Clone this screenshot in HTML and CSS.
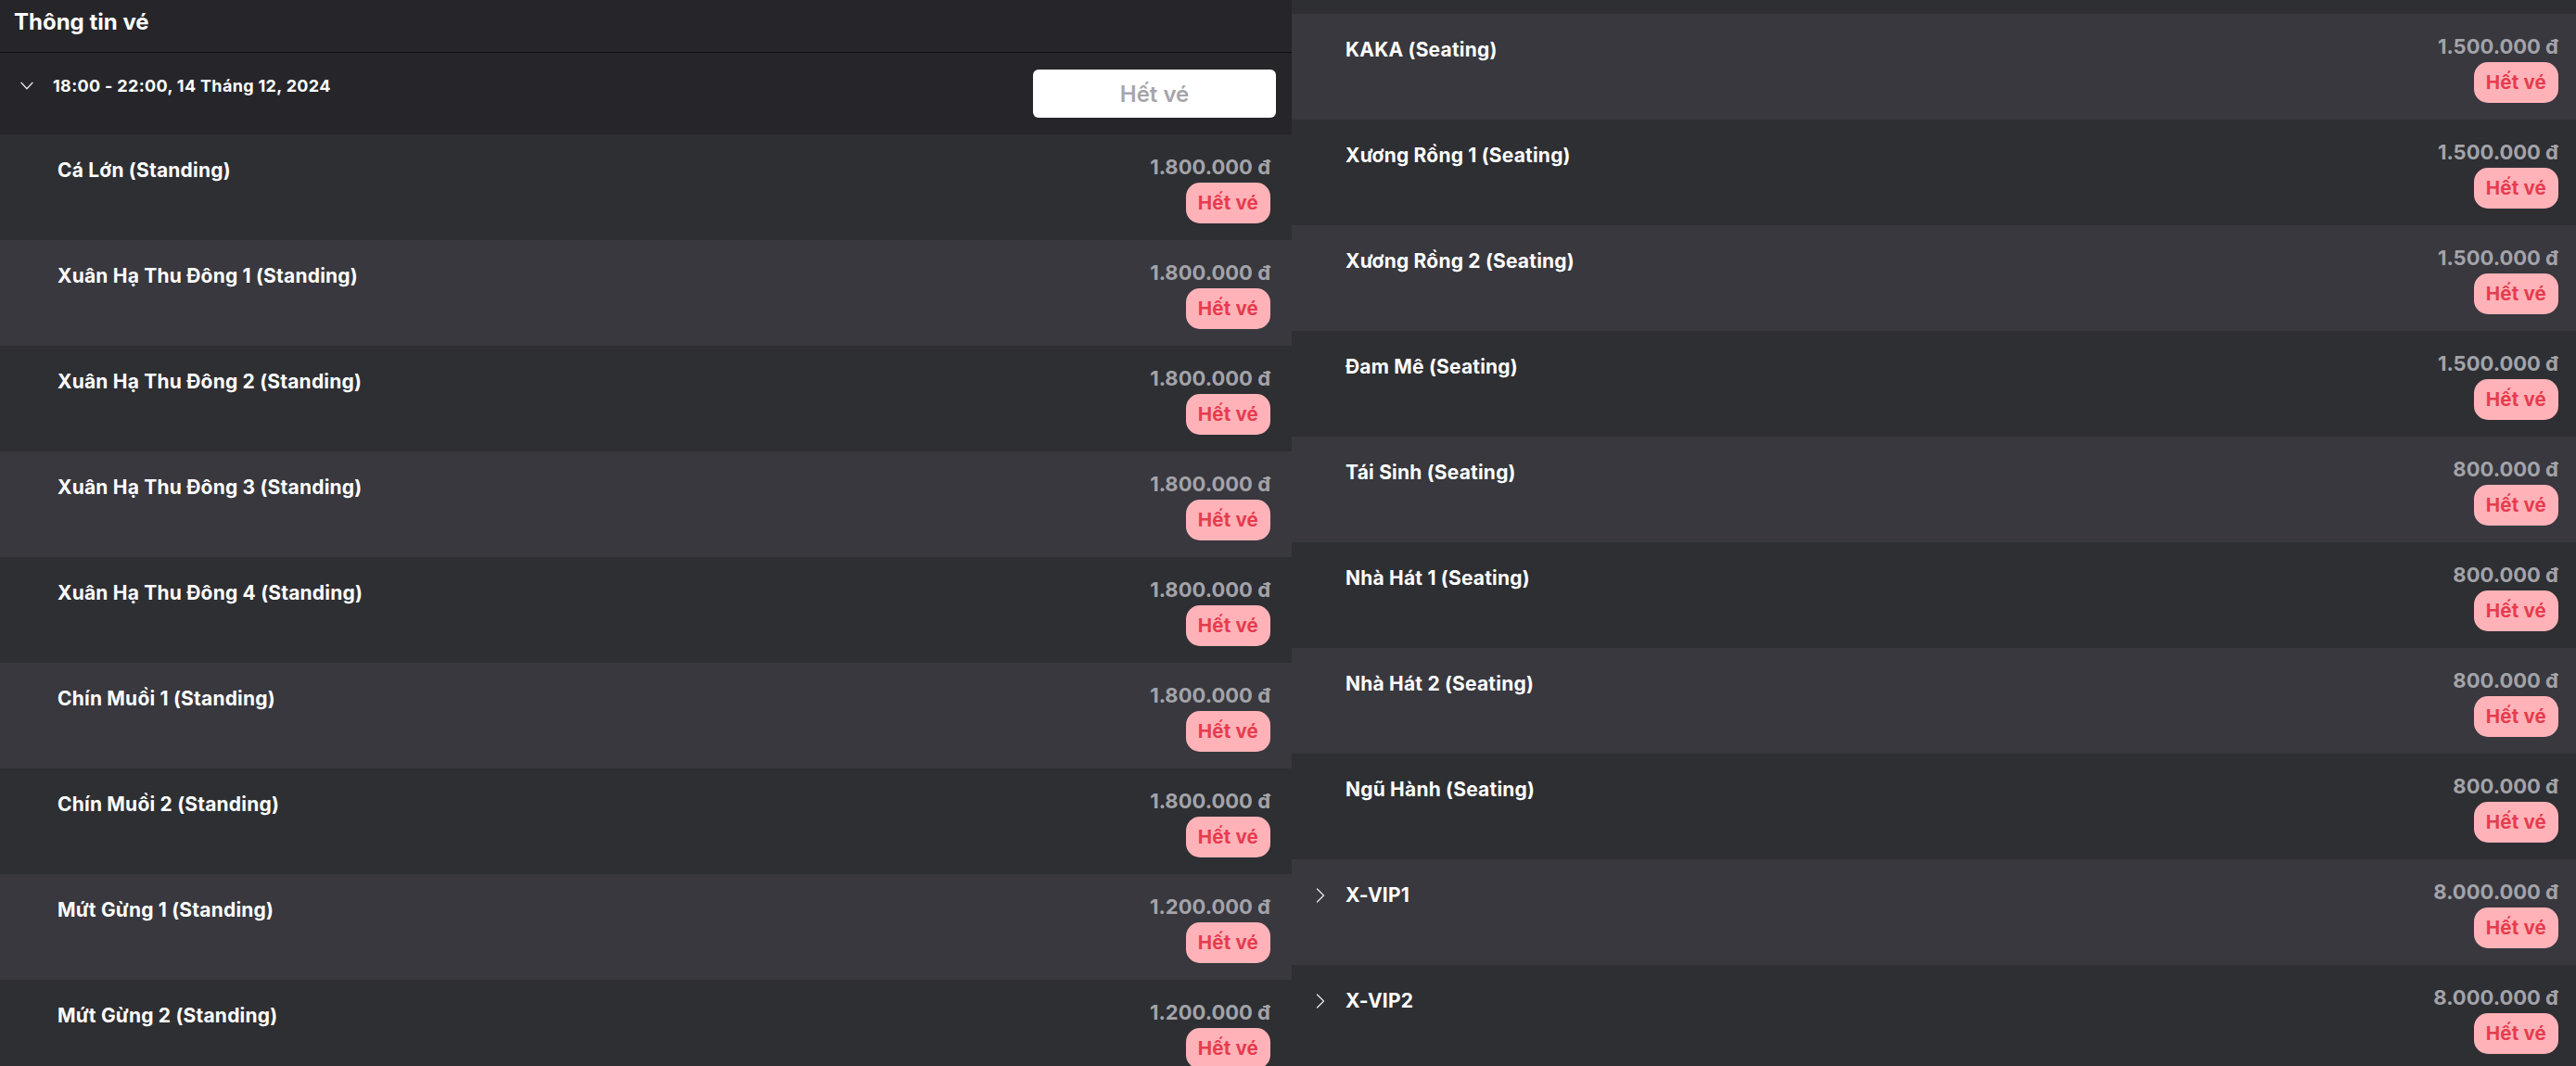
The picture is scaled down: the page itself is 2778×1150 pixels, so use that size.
FILE: index.html
```html
<!DOCTYPE html>
<html lang="vi">
<head>
<meta charset="utf-8">
<title>Thông tin vé</title>
<link rel="stylesheet" href="styles.css">
</head>
<body>
<div class="page">
  <section class="col col-left">
    <header class="panel-header"><h1 class="panel-title">Thông tin vé</h1></header>
    <div class="show-row">
      <div class="show-info">
        <span class="show-toggle"><svg width="14" height="9" viewBox="0 0 14 9"><path d="M1 1.2 L7 7.8 L13 1.2" fill="none" stroke="#e6e6e8" stroke-width="1.3" stroke-linecap="round" stroke-linejoin="round"/></svg></span>
        <span class="show-date">18:00 - 22:00, 14 Tháng 12, 2024</span>
      </div>
      <button class="soldout-btn" type="button">Hết vé</button>
    </div>
    <ul class="ticket-list">
      <li class="ticket"><span class="toggle"></span><span class="ticket-name">Cá Lớn (Standing)</span><div class="ticket-side"><span class="ticket-price">1.800.000 đ</span><span class="badge">Hết vé</span></div></li>
      <li class="ticket"><span class="toggle"></span><span class="ticket-name">Xuân Hạ Thu Đông 1 (Standing)</span><div class="ticket-side"><span class="ticket-price">1.800.000 đ</span><span class="badge">Hết vé</span></div></li>
      <li class="ticket"><span class="toggle"></span><span class="ticket-name">Xuân Hạ Thu Đông 2 (Standing)</span><div class="ticket-side"><span class="ticket-price">1.800.000 đ</span><span class="badge">Hết vé</span></div></li>
      <li class="ticket"><span class="toggle"></span><span class="ticket-name">Xuân Hạ Thu Đông 3 (Standing)</span><div class="ticket-side"><span class="ticket-price">1.800.000 đ</span><span class="badge">Hết vé</span></div></li>
      <li class="ticket"><span class="toggle"></span><span class="ticket-name">Xuân Hạ Thu Đông 4 (Standing)</span><div class="ticket-side"><span class="ticket-price">1.800.000 đ</span><span class="badge">Hết vé</span></div></li>
      <li class="ticket"><span class="toggle"></span><span class="ticket-name">Chín Muồi 1 (Standing)</span><div class="ticket-side"><span class="ticket-price">1.800.000 đ</span><span class="badge">Hết vé</span></div></li>
      <li class="ticket"><span class="toggle"></span><span class="ticket-name">Chín Muồi 2 (Standing)</span><div class="ticket-side"><span class="ticket-price">1.800.000 đ</span><span class="badge">Hết vé</span></div></li>
      <li class="ticket"><span class="toggle"></span><span class="ticket-name">Mứt Gừng 1 (Standing)</span><div class="ticket-side"><span class="ticket-price">1.200.000 đ</span><span class="badge">Hết vé</span></div></li>
      <li class="ticket"><span class="toggle"></span><span class="ticket-name">Mứt Gừng 2 (Standing)</span><div class="ticket-side"><span class="ticket-price">1.200.000 đ</span><span class="badge">Hết vé</span></div></li>
    </ul>
  </section>
  <section class="col col-right">
    <div class="ticket-tail"></div>
    <ul class="ticket-list ticket-list-cont">
      <li class="ticket"><span class="toggle"></span><span class="ticket-name">KAKA (Seating)</span><div class="ticket-side"><span class="ticket-price">1.500.000 đ</span><span class="badge">Hết vé</span></div></li>
      <li class="ticket"><span class="toggle"></span><span class="ticket-name">Xương Rồng 1 (Seating)</span><div class="ticket-side"><span class="ticket-price">1.500.000 đ</span><span class="badge">Hết vé</span></div></li>
      <li class="ticket"><span class="toggle"></span><span class="ticket-name">Xương Rồng 2 (Seating)</span><div class="ticket-side"><span class="ticket-price">1.500.000 đ</span><span class="badge">Hết vé</span></div></li>
      <li class="ticket"><span class="toggle"></span><span class="ticket-name">Đam Mê (Seating)</span><div class="ticket-side"><span class="ticket-price">1.500.000 đ</span><span class="badge">Hết vé</span></div></li>
      <li class="ticket"><span class="toggle"></span><span class="ticket-name">Tái Sinh (Seating)</span><div class="ticket-side"><span class="ticket-price">800.000 đ</span><span class="badge">Hết vé</span></div></li>
      <li class="ticket"><span class="toggle"></span><span class="ticket-name">Nhà Hát 1 (Seating)</span><div class="ticket-side"><span class="ticket-price">800.000 đ</span><span class="badge">Hết vé</span></div></li>
      <li class="ticket"><span class="toggle"></span><span class="ticket-name">Nhà Hát 2 (Seating)</span><div class="ticket-side"><span class="ticket-price">800.000 đ</span><span class="badge">Hết vé</span></div></li>
      <li class="ticket"><span class="toggle"></span><span class="ticket-name">Ngũ Hành (Seating)</span><div class="ticket-side"><span class="ticket-price">800.000 đ</span><span class="badge">Hết vé</span></div></li>
      <li class="ticket"><span class="toggle"><svg width="10" height="16" viewBox="0 0 10 16"><path d="M1.5 1 L8.5 8 L1.5 15" fill="none" stroke="#e6e6e8" stroke-width="1.3" stroke-linecap="round" stroke-linejoin="round"/></svg></span><span class="ticket-name">X-VIP1</span><div class="ticket-side"><span class="ticket-price">8.000.000 đ</span><span class="badge">Hết vé</span></div></li>
      <li class="ticket"><span class="toggle"><svg width="10" height="16" viewBox="0 0 10 16"><path d="M1.5 1 L8.5 8 L1.5 15" fill="none" stroke="#e6e6e8" stroke-width="1.3" stroke-linecap="round" stroke-linejoin="round"/></svg></span><span class="ticket-name">X-VIP2</span><div class="ticket-side"><span class="ticket-price">8.000.000 đ</span><span class="badge">Hết vé</span></div></li>
    </ul>
  </section>
</div>
</body>
</html>
```

FILE: styles.css
```css
html, body {
  margin: 0;
  padding: 0;
  height: 1150px;
  overflow: hidden;
  background: #2e2f33;
  font-family: Inter, "Noto Sans", sans-serif;
}

.page {
  display: grid;
  grid-template-columns: 1393px 1fr;
  height: 1150px;
  overflow: hidden;
}

.col {
  min-width: 0;
  overflow: hidden;
}

.panel-header {
  height: 57px;
  box-sizing: border-box;
  padding: 8px 15px;
  background: #26262a;
  border-bottom: 1px solid #0e0e10;
}

.panel-title {
  margin: 0;
  font-size: 24px;
  line-height: 32px;
  font-weight: 700;
  color: #ffffff;
}

.show-row {
  height: 88px;
  box-sizing: border-box;
  padding: 18px 17px 18px 22px;
  background: #26262a;
  display: flex;
  justify-content: space-between;
  align-items: flex-start;
}

.show-info {
  display: flex;
  align-items: center;
  margin-top: 4px;
  height: 27px;
}

.show-toggle {
  width: 35px;
  display: flex;
  align-items: center;
}

.show-toggle svg {
  display: block;
}

.show-date {
  font-size: 18px;
  line-height: 27px;
  font-weight: 700;
  letter-spacing: 0.33px;
  color: #ffffff;
}

.soldout-btn {
  width: 262px;
  height: 52px;
  border: none;
  border-radius: 6px;
  background: #ffffff;
  color: #a5a5aa;
  font-family: Inter, "Noto Sans", sans-serif;
  font-size: 24px;
  font-weight: 600;
  padding: 0;
}

.ticket-list {
  list-style: none;
  margin: 0;
  padding: 0;
}

.ticket {
  display: flex;
  align-items: flex-start;
  height: 114px;
  box-sizing: border-box;
  padding: 21px 23px 0 22px;
  background: #2e2f33;
}

.ticket-list .ticket:nth-child(even) {
  background: #38383e;
}

.ticket-list-cont .ticket {
  background: #38383e;
}

.ticket-list-cont .ticket:nth-child(even) {
  background: #2e2f33;
}

.col-right .ticket {
  padding: 21px 19px 0 18px;
}

.ticket-tail {
  height: 15px;
  background: #2e2f33;
}

.toggle {
  flex: none;
  width: 40px;
  height: 36px;
  box-sizing: border-box;
  padding-left: 8px;
  display: flex;
  align-items: center;
}

.toggle svg {
  display: block;
}

.ticket-name {
  flex: 1;
  font-size: 21px;
  line-height: 36px;
  font-weight: 700;
  letter-spacing: 0.2px;
  color: #ffffff;
}

.ticket-side {
  display: flex;
  flex-direction: column;
  align-items: flex-end;
  margin-top: -1px;
}

.ticket-price {
  font-size: 22px;
  line-height: 30px;
  font-weight: 700;
  color: #a3a3a9;
}

.badge {
  margin-top: 2px;
  height: 44px;
  line-height: 44px;
  padding: 0 13px;
  border-radius: 15px;
  background: #ffb3b8;
  color: #e63c4e;
  font-size: 20.5px;
  font-weight: 700;
  letter-spacing: 0.2px;
}
```
